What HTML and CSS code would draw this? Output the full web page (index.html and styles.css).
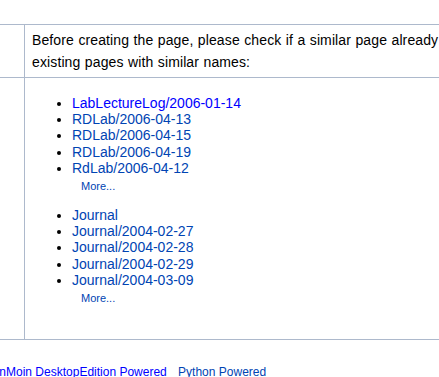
FILE: index.html
```html
<!DOCTYPE html>
<html lang="en">
<head>
    <meta charset="UTF-8">
    <meta name="viewport" content="width=device-width, initial-scale=1.0">
    <title>Create new page</title>
    <link rel="stylesheet" href="styles.css">
</head>
<body>

<div class="content">
    <table class="dialog">
        <tr>
            <td class="side"></td>
            <td class="main intro">
                <p>Before creating the page, please check if a similar page already exists. Here is a list of<br>
                existing pages with similar names:</p>
            </td>
        </tr>
        <tr>
            <td class="side"></td>
            <td class="main pages">
                <ul>
                    <li><a class="new" href="#">LabLectureLog/2006-01-14</a></li>
                    <li><a href="#">RDLab/2006-04-13</a></li>
                    <li><a href="#">RDLab/2006-04-15</a></li>
                    <li><a href="#">RDLab/2006-04-19</a></li>
                    <li><a href="#">RdLab/2006-04-12</a></li>
                </ul>
                <div class="more"><a href="#">More...</a></div>

                <ul>
                    <li><a href="#">Journal</a></li>
                    <li><a href="#">Journal/2004-02-27</a></li>
                    <li><a href="#">Journal/2004-02-28</a></li>
                    <li><a href="#">Journal/2004-02-29</a></li>
                    <li><a href="#">Journal/2004-03-09</a></li>
                </ul>
                <div class="more"><a href="#">More...</a></div>
            </td>
        </tr>
    </table>
</div>

<!-- Footer credits -->
<div class="footer">
    <a class="new" href="#">MoinMoin DesktopEdition Powered</a>
    <a href="#">Python Powered</a>
</div>

</body>
</html>
```

FILE: styles.css
```css
html, body {
    overflow: hidden;
}

body {
    font-family: "Liberation Sans", Arial, sans-serif;
    font-size: 14px;
    color: #000;
    background-color: white;
    margin: 0;
}

a {
    color: #0044b3;
    text-decoration: none;
}

a.new {
    color: #0000ff;
}

.content {
    padding-top: 24px;
}

.dialog {
    width: 760px;
    border-collapse: collapse;
}

.dialog td {
    border: 1px solid #adb9cc;
    border-left: none;
    border-right: none;
    vertical-align: top;
    padding: 0;
}

.dialog td.side {
    width: 24px;
    border-right: 1px solid #adb9cc;
}

.main {
    padding: 4px 8px 4px 7px !important;
}

.intro p {
    margin: 0;
    line-height: 22px;
    letter-spacing: 0.12px;
    word-spacing: 0.4px;
    white-space: nowrap;
}

.pages {
    padding-bottom: 33px !important;
}

.pages ul {
    margin: 13px 0 0;
    padding-left: 40px;
}

.pages li {
    line-height: 16.2px;
}

.more {
    margin: 2px 0 0 49px;
    font-size: 11px;
    line-height: 16px;
}

.footer {
    margin: 25px 0 0 -20px;
    font-size: 12px;
    line-height: 14px;
    white-space: nowrap;
}

.footer a + a {
    margin-left: 8px;
}
```
